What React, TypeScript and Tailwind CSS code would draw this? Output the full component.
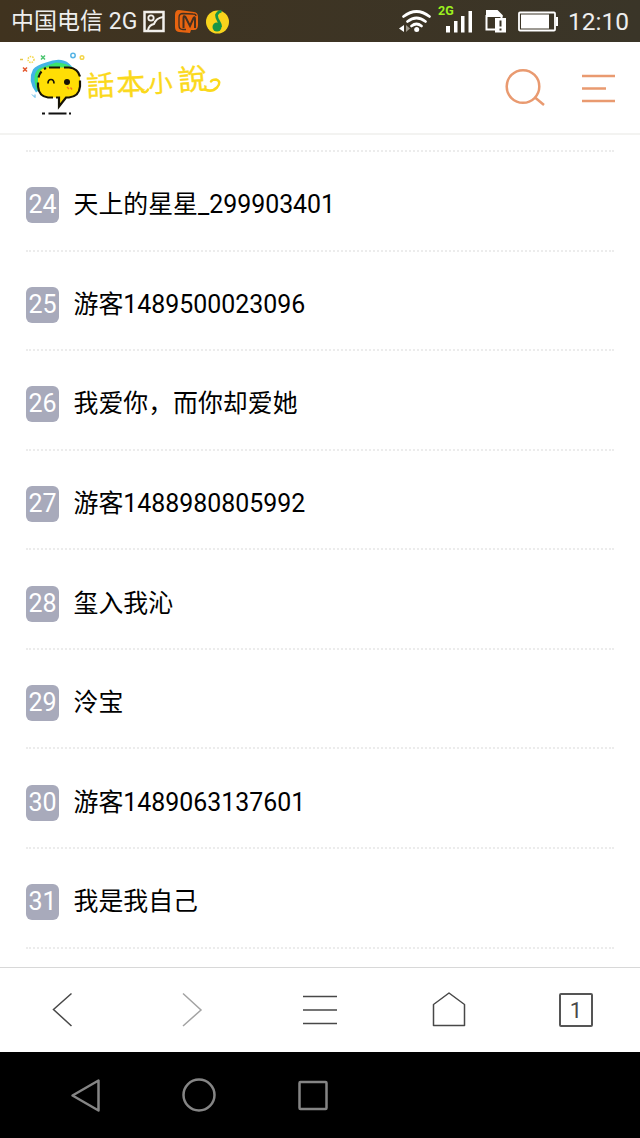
const font = "font-['Roboto','Noto_Sans_CJK_SC',sans-serif]";

const rows = [
  { rank: 24, name: "天上的星星_299903401" },
  { rank: 25, name: "游客1489500023096" },
  { rank: 26, name: "我爱你，而你却爱她" },
  { rank: 27, name: "游客1488980805992" },
  { rank: 28, name: "玺入我沁" },
  { rank: 29, name: "泠宝" },
  { rank: 30, name: "游客1489063137601" },
  { rank: 31, name: "我是我自己" },
];

function StatusBar() {
  return (
    <div className="flex h-[42px] shrink-0 items-center bg-linear-to-r from-[#40331f] to-[#3a3528] pl-[11px] pr-[11px] text-[#eee]">
      <span className="w-[131px] whitespace-nowrap pt-0.5 text-[23px] leading-[44px]">中国电信 2G</span>
      <svg width="90" height="42" viewBox="142 0 90 42" fill="none">
        <rect x="144.500" y="12" width="19" height="19" stroke="#f2f0ec" strokeWidth="2.500" />
        <circle cx="151" cy="18" r="2.700" stroke="#f2f0ec" strokeWidth="1.800" />
        <path d="M148 30q1-5 6-6 2-6 9-7" stroke="#f2f0ec" strokeWidth="2" />
        <path d="M179 10l15 2q4 .500 4 5v8q0 5-4 5h-3l-1 3-11-1q-4-.500-4-5V15q0-5 4-5z" fill="#e86410" />
        <path d="M196 16q0-2-3-2l-10-.500q-4 0-4 4v8q0 4 4 4h3" stroke="#443020" strokeWidth="1.300" />
        <path d="M183.500 28V18q0-3 2-1l4.500 9 3.500-8q1.500-2 1.500 1v9" stroke="#443020" strokeWidth="2" />
        <circle cx="217.500" cy="22" r="11.500" fill="#f8d41c" />
        <circle cx="217" cy="27" r="4.500" fill="#159447" />
        <path d="M220.500 27q0-3-2-6t-2-6q1-3 5-4" stroke="#159447" strokeWidth="2.800" />
      </svg>
      <svg className="ml-auto" width="166" height="42" viewBox="396 0 166 42" fill="none">
        <g stroke="#fff" strokeWidth="2.800" strokeLinecap="round">
          <path d="M403.500 16.500q13-10 26 0" />
          <path d="M407.500 21.500q9-7 18 0" />
          <path d="M411.500 26q5-4 10 0" />
        </g>
        <circle cx="416.700" cy="29.500" r="2.500" fill="#fff" />
        <path d="M404 25v7l-5-3.500z" fill="#fff" />
        <path d="M406 25v7l4-3.500z" fill="#9b9588" />
        <text x="438" y="15" fill="#9df01e" fontSize="12.500" fontWeight="700">2G</text>
        <path d="M446 26h4v6.500h-4zM454 21h3.500v11.500H454zM461 16h3.500v16.500H461zM468.500 11h3.500v21.500h-3.500z" fill="#fff" />
        <path d="M486.500 15v14.500H495M501.500 15v4" stroke="#fff" strokeWidth="2" />
        <path d="M486 10h11.500l5 5v2H486z" fill="#fff" />
        <path d="M495 18h11v14.500h-11z" fill="#fff" />
        <path d="M500.500 20.500v6M500.500 28.500v2" stroke="#3a3528" strokeWidth="2" />
        <rect x="519" y="12.500" width="36" height="18" rx="1" stroke="#fff" strokeWidth="1.800" />
        <path d="M521 14.500h28v14h-28zM556 17h2v9h-2z" fill="#fff" />
      </svg>
      <span className="ml-1.5 pt-0.5 text-[24.500px] leading-[46px]">12:10</span>
    </div>
  );
}

function Logo() {
  return (
    <svg width="210" height="74" viewBox="15 50.500 210 74" fill="none" aria-label="話本小說">
      <path d="M36 92Q27 80 33 69Q36 65 46 62Q61 56 69 63L75 69 40 89z" fill="#42b4e6" />
      <path d="M37 90Q31 74 39 68L56 62Q66 62 74 68L41 90z" fill="#3ce36c" />
      <path d="M48 67h20q12 0 12 12v6q0 12-12 12h-3l-6 9-1-9H49q-11 0-11-12v-6q0-12 10-12z" fill="#ffde05" />
      <path
        d="M49 67h11M64 67h5q9 1 11 9M80 80v6q-1 10-11 11h-3l-7 9v-9h-3M53 97h-5q-9-1-10-11v-4M38.500 77q1-4 3-6M44 68.500l2-1"
        stroke="#171306"
        strokeWidth="2.200"
      />
      <path d="M48 83q0-4 3-4t3 4" stroke="#171306" strokeWidth="1.700" />
      <circle cx="67" cy="81.500" r="3" fill="#171306" />
      <path d="M67 86.500l2 2M70.500 87l1.500 2" stroke="#f37224" strokeWidth="1.300" />
      <path d="M42 113h3M48.500 113h18M69 113h2" stroke="#111" strokeWidth="2" />
      <circle cx="31" cy="59" r="3" stroke="#f4d64b" strokeWidth="1.500" strokeDasharray="1.500 1" />
      <circle cx="73" cy="55" r="2.200" stroke="#56b4e5" strokeWidth="1.500" />
      <circle cx="82" cy="57" r="1.800" stroke="#f4d64b" strokeWidth="1.500" />
      <path d="M41 55l4 4M45 55l-4 4" stroke="#4ac46f" strokeWidth="1.500" />
      <path d="M23 67l4 4M27 67l-4 4" stroke="#e4572d" strokeWidth="1.500" />
      <path d="M20 59h3" stroke="#e4c646" strokeWidth="1.500" />
      <path d="M32 94l3 3v-3" stroke="#56b4e5" />
      <g fill="#fbd91c" stroke="#fbd91c" strokeWidth=".400" fontFamily="'Noto Sans CJK TC', sans-serif">
        <text fontSize="28" transform="translate(87 96) rotate(-3)">話</text>
        <text fontSize="29" transform="translate(117 95) rotate(-3)">本</text>
        <text fontSize="24" transform="translate(149 92) rotate(-3)">小</text>
        <text fontSize="29" transform="translate(179 90.500) rotate(-5)">說</text>
      </g>
      <path
        d="M205 89q7 3 12-2 5-6-1-8-4 0-5 2M142 91q4 2 6-2"
        stroke="#fbd91c"
        strokeWidth="2.500"
        strokeLinecap="round"
      />
    </svg>
  );
}

function SiteHeader() {
  return (
    <header className="flex h-[93px] shrink-0 items-center border-b-2 border-[#f3f3f1] pl-[15px] pr-6">
      <Logo />
      <svg className="ml-auto" width="112" height="50" viewBox="504 63 112 50" fill="none" stroke="#e99a70" strokeWidth="2.500">
        <circle cx="523" cy="86.500" r="16.300" />
        <path d="M535 97.500l9 7.500M582 76h33M582 88.500h24M582 101h33" />
      </svg>
    </header>
  );
}

function RankList() {
  return (
    <main className="min-h-0 flex-1 overflow-hidden px-[26px] pt-[15px]">
      <div className="h-[1.500px] border-t-2 border-dotted border-[#ececec]" />
      {rows.map((row) => (
        <div
          key={row.rank}
          className="flex h-[99.570px] items-center border-b-2 border-dotted border-[#ececec] pt-[9px]"
        >
          <span className="h-9 w-[33px] rounded-md bg-[#a8aabb] text-center text-[25px] leading-[35px] text-white">
            {row.rank}
          </span>
          <span className="ml-[14.500px] text-[24.900px] leading-9 text-black">{row.name}</span>
        </div>
      ))}
    </main>
  );
}

function BrowserBar() {
  return (
    <nav className="flex h-[85px] shrink-0 items-center justify-around border-t border-[#d8d8d8] pr-px text-[#484848]">
      <svg width="36" height="36" viewBox="0 0 36 36" fill="none" stroke="currentColor" strokeWidth="1.500">
        <path d="M25.500 1.500L7.500 17.500l18 16.500" />
      </svg>
      <svg width="36" height="36" viewBox="0 0 36 36" fill="none" stroke="#a3a3a3" strokeWidth="1.500">
        <path d="M9 1.500l18 16.500L9 34" />
      </svg>
      <svg width="36" height="36" viewBox="0 0 36 36" stroke="currentColor" strokeWidth="1.700">
        <path d="M1 4.500h34M1 18h34M1 31.500h34" />
      </svg>
      <svg width="36" height="36" viewBox="0 0 36 36" fill="none" stroke="currentColor" strokeWidth="1.500" strokeLinejoin="round">
        <path d="M18 1l15.500 11.500v21h-31v-21z" />
      </svg>
      <span className="h-[34px] w-[34px] rounded-xs border-2 border-[#555] text-center text-[22px] leading-[31px]">1</span>
    </nav>
  );
}

function SystemNav() {
  return (
    <div className="flex h-[86px] shrink-0 items-center bg-black pl-[68px]">
      <svg width="262" height="40" viewBox="68 1075 262 40" fill="none" stroke="#858585" strokeWidth="2.500" strokeLinejoin="round">
        <path d="M98.500 1080.500v30L72.500 1095.500z" />
        <circle cx="199" cy="1095" r="15.500" />
        <rect x="299.500" y="1082" width="27" height="27" rx="1" />
      </svg>
    </div>
  );
}

export default function App() {
  return (
    <div className={`flex h-[1138px] w-[640px] flex-col overflow-hidden bg-white ${font}`}>
      <StatusBar />
      <SiteHeader />
      <RankList />
      <BrowserBar />
      <SystemNav />
    </div>
  );
}
